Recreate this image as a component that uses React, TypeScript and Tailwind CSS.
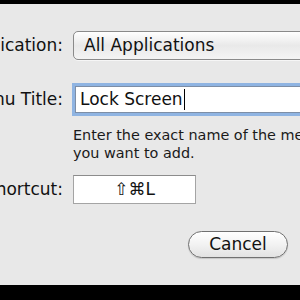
const font = { fontFamily: '"DejaVu Sans", "Liberation Sans", sans-serif' };

function Label({ children }: { children: string }) {
  return (
    <div className="flex items-center justify-end">
      <span className="shrink-0 whitespace-nowrap text-[17px] text-[#111]">{children}</span>
    </div>
  );
}

export default function App() {
  return (
    <div className="flex h-[300px] w-[300px] flex-col overflow-hidden bg-black" style={font}>
      <div className="h-[4px] shrink-0 bg-black" />
      <div className="flex-1 overflow-hidden bg-[#e8e8e8]">
        <div className="grid grid-cols-[63px_auto] gap-x-[10px] pt-[27px]">
          {/* Application */}
          <Label>Application:</Label>
          <div className="flex h-[29px] w-[260px] items-center rounded-[5px] border border-[#8a8a8a] bg-gradient-to-b from-white via-[#e9e9e9] to-[#f4f4f4] pl-[10px] shadow-[0_1px_0_rgba(255,255,255,0.6)]">
            <span className="whitespace-nowrap text-[17px] text-[#111]">All Applications</span>
          </div>

          {/* Menu title */}
          <div className="col-span-2 h-[26px]" />
          <Label>Menu Title:</Label>
          <div className="pl-[2px]">
            <div className="flex h-[27px] w-[260px] items-center border border-[#7d8ea6] bg-white pl-[4px] shadow-[0_0_0_3px_#8fb4e2]">
              <span className="whitespace-nowrap text-[17px] text-[#111]">Lock Screen</span>
              <span className="ml-px h-[21px] w-px bg-black" />
            </div>
          </div>

          <div className="col-span-2 h-[13px]" />
          <div />
          <p className="whitespace-nowrap text-[14.4px] leading-[18px] text-[#1a1a1a]">
            Enter the exact name of the menu command
            <br />
            you want to add.
          </p>

          {/* Shortcut */}
          <div className="col-span-2 h-[13px]" />
          <Label>Keyboard Shortcut:</Label>
          <div className="flex h-[29px] w-[123px] items-center justify-center border border-[#a4a4a4] border-t-[#8c8c8c] bg-white">
            <span className="text-[17px] text-[#111]">⇧⌘L</span>
          </div>
        </div>

        <div className="flex justify-end pr-[12px] pt-[27px]">
          <button className="flex h-[27px] w-[100px] items-center justify-center rounded-full border border-[#707070] bg-gradient-to-b from-white via-[#f2f2f2] to-[#e2e2e2] text-[17px] text-[#111] shadow-[0_1px_1px_rgba(0,0,0,0.15)]">
            Cancel
          </button>
        </div>
      </div>
      <div className="h-[15px] shrink-0 bg-black" />
    </div>
  );
}
